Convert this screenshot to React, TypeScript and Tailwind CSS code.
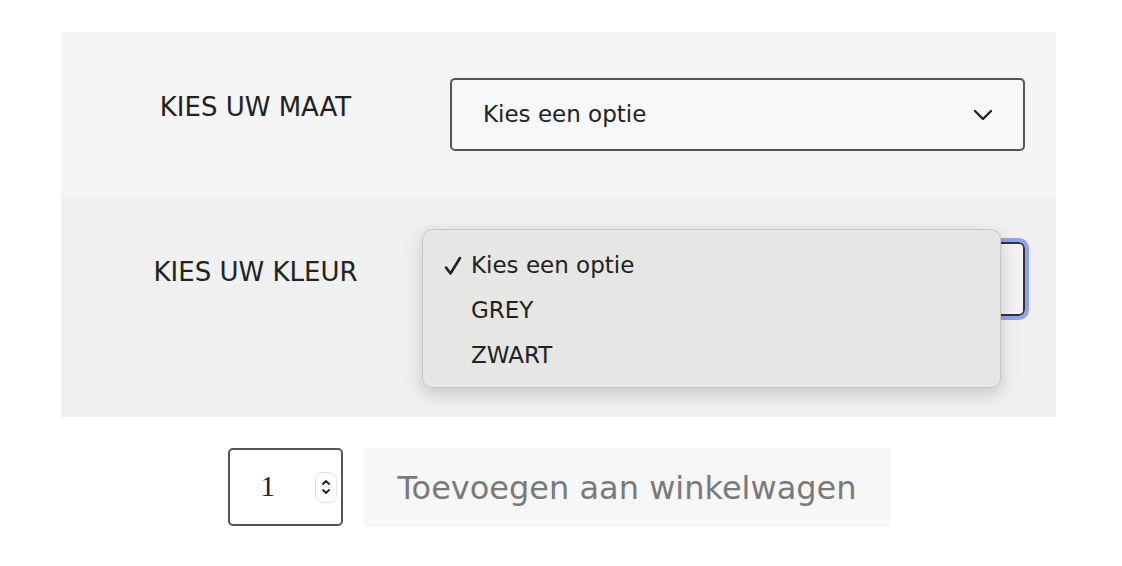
import React from 'react';

const font = { fontFamily: '"DejaVu Sans", Verdana, sans-serif' };

function Chevron() {
  return (
    <svg width="20" height="12" viewBox="0 0 20 12" fill="none">
      <path d="M2 2l8 8 8-8" stroke="#222" strokeWidth="2.4" strokeLinecap="round" strokeLinejoin="round" />
    </svg>
  );
}

function Check() {
  return (
    <svg width="18" height="20" viewBox="0 0 18 20" fill="none">
      <path d="M2 11.5l4.5 6L16 2" stroke="#222" strokeWidth="2.6" strokeLinecap="round" strokeLinejoin="round" />
    </svg>
  );
}

function Spinner() {
  return (
    <div className="flex h-[31px] w-[22px] flex-col items-center justify-center rounded-[8px] border border-[#e2e2e2] bg-white">
      <svg width="12" height="24" viewBox="0 0 12 24" fill="none">
        <path d="M3 9l3-3 3 3" stroke="#222" strokeWidth="1.8" strokeLinecap="round" strokeLinejoin="round" />
        <line x1="0" y1="12" x2="12" y2="12" stroke="#e6e6e6" strokeWidth="1" />
        <path d="M3 15l3 3 3-3" stroke="#222" strokeWidth="1.8" strokeLinecap="round" strokeLinejoin="round" />
      </svg>
    </div>
  );
}

export default function App() {
  return (
    <div className="relative h-[566px] w-full overflow-hidden bg-white text-[#222]" style={font}>
      <div className="ml-[61px] mt-[32px] w-[995px]">
        {/* maat */}
        <div className="grid h-[165px] grid-cols-[389px_575px] bg-[#f5f5f5] pt-[46px]">
          <div className="flex h-[73px] items-center justify-center pb-[14px] text-[26px]">KIES UW MAAT</div>
          <div className="flex h-[73px] items-center justify-between rounded-[5px] border-2 border-[#555] bg-[#f7f8f9] pl-[31px] pr-[30px] text-[23px]">
            <span>Kies een optie</span>
            <Chevron />
          </div>
        </div>

        {/* kleur */}
        <div className="relative grid h-[220px] grid-cols-[389px_575px] bg-[#f0f0f0] pt-[45px]">
          <div className="flex h-[74px] items-center justify-center pb-[14px] text-[26px]">KIES UW KLEUR</div>
          <div className="h-[74px] rounded-[6px] border-2 border-[#333] bg-[#f3f3f3] outline-[4px] outline-[#8aa4ee] outline-offset-0" />

          <div className="absolute left-[361px] top-[32px] flex h-[159px] w-[579px] flex-col rounded-[10px] border border-[#c6c6c6] bg-[#e6e6e5] pt-[13px] text-[23px] shadow-[0_6px_18px_rgba(0,0,0,0.18)]">
            <div className="flex h-[45px] items-center">
              <span className="flex w-[48px] justify-start pl-[21px]">
                <Check />
              </span>
              <span>Kies een optie</span>
            </div>
            <div className="flex h-[45px] items-center pl-[48px]">GREY</div>
            <div className="flex h-[45px] items-center pl-[48px]">ZWART</div>
          </div>
        </div>
      </div>

      <div className="mt-[31px] flex justify-center gap-[21px] pr-[4px]">
        <div className="flex h-[78px] w-[115px] items-center justify-between rounded-[5px] border-2 border-[#555] pl-[31px] pr-[4px] text-[29px]" style={{ fontFamily: '"Liberation Serif", serif' }}>
          <span>1</span>
          <Spinner />
        </div>
        <div className="flex h-[79px] w-[527px] items-center justify-center rounded-[4px] bg-[#f7f7f7] text-[32px] text-[#7a7a7a]">
          Toevoegen aan winkelwagen
        </div>
      </div>
    </div>
  );
}
